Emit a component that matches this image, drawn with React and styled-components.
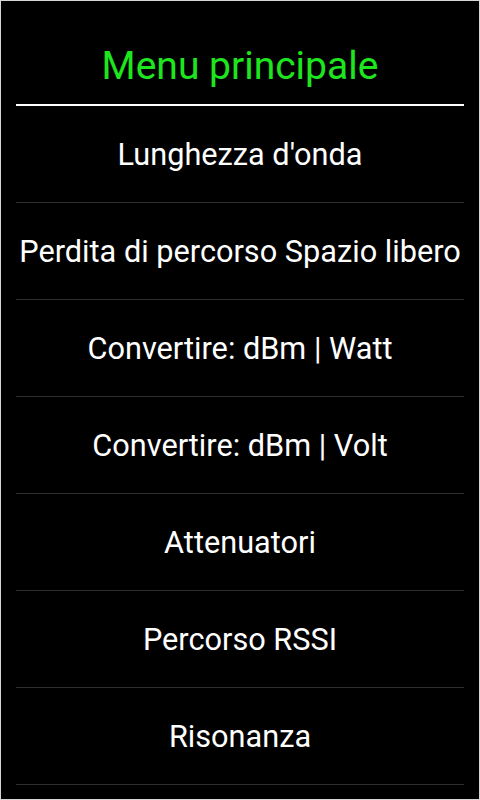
import { createGlobalStyle, styled } from 'styled-components';

const GlobalStyle = createGlobalStyle`
  html, body {
    margin: 0;
    padding: 0;
    background: #000;
  }
`

const Screen = styled.div`
  width: 480px;
  height: 800px;
  box-sizing: border-box;
  border: 1px solid #d6d6d6;
  background: #000;
  font-family: Roboto, "Noto Sans", sans-serif;
  overflow: hidden;
`

const Header = styled.header`
  margin: 0 15px;
  padding: 45px 0 18px;
  border-bottom: 2px solid #fff;
  text-align: center;
`

const Title = styled.h1`
  margin: 0;
  font-size: 39px;
  line-height: 40px;
  font-weight: 400;
  color: #1ee61e;
`

const Menu = styled.ul`
  list-style: none;
  margin: 0 15px;
  padding: 0;
`

const MenuItem = styled.li`
  height: 96px;
  display: flex;
  align-items: center;
  justify-content: center;
  border-bottom: 1px solid #2e2e2e;
  color: #fff;
  font-size: 30.7px;
  white-space: nowrap;
`

const items = [
  "Lunghezza d'onda",
  'Perdita di percorso Spazio libero',
  'Convertire: dBm | Watt',
  'Convertire: dBm | Volt',
  'Attenuatori',
  'Percorso RSSI',
  'Risonanza',
]

export default function App() {
  return (
    <>
      <GlobalStyle />
      <Screen>
        <Header>
          <Title>Menu principale</Title>
        </Header>
        <Menu>
          {items.map((label) => (
            <MenuItem key={label}>{label}</MenuItem>
          ))}
        </Menu>
      </Screen>
    </>
  );
}
